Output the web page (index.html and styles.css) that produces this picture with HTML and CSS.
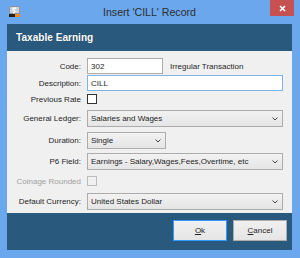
FILE: index.html
```html
<!DOCTYPE html>
<html lang="en">
<head>
    <meta charset="UTF-8">
    <meta name="viewport" content="width=device-width, initial-scale=1.0">
    <title>Insert 'CILL' Record</title>
    <link rel="stylesheet" href="styles.css">
</head>
<body>
    <div class="window">
        <div class="titlebar">
            <svg class="app-icon" width="11" height="11" viewBox="0 0 11 11">
                <rect x="0" y="0" width="11" height="11" rx="1" fill="#8c96a3"/>
                <rect x="1" y="1" width="9" height="6" fill="#c9d0d8"/>
                <path d="M7 2.5 C5 1.5 3 2.5 4.5 4 C6 5 6.5 6.5 4 7" stroke="#ffffff" stroke-width="1.4" fill="none"/>
                <rect x="0" y="8" width="6" height="3" fill="#222222"/>
                <rect x="6" y="8" width="5" height="3" fill="#f08a24"/>
            </svg>
            <div class="title">Insert 'CILL' Record</div>
            <button class="close-btn">
                <svg width="7" height="7" viewBox="0 0 7 7">
                    <path d="M1 1 L6 6 M6 1 L1 6" stroke="#ffffff" stroke-width="1.6"/>
                </svg>
            </button>
        </div>

        <div class="client">
            <div class="header">Taxable Earning</div>

            <div class="form">
                <div class="row row-code">
                    <label>Code:</label>
                    <input type="text" class="textbox code-box" value="302">
                    <span class="side-note">Irregular Transaction</span>
                </div>
                <div class="row row-desc">
                    <label>Description:</label>
                    <input type="text" class="textbox wide focused" value="CILL">
                </div>
                <div class="row row-check">
                    <label>Previous Rate</label>
                    <span class="check"></span>
                </div>
                <div class="row row-gl">
                    <label>General Ledger:</label>
                    <div class="combo wide"><span>Salaries and Wages</span><svg class="chev" width="6" height="4" viewBox="0 0 6 4"><path d="M0.5 0.5 L3 3 L5.5 0.5" stroke="#444" stroke-width="1" fill="none"/></svg></div>
                </div>
                <div class="row row-dur">
                    <label>Duration:</label>
                    <div class="combo short"><span>Single</span><svg class="chev" width="6" height="4" viewBox="0 0 6 4"><path d="M0.5 0.5 L3 3 L5.5 0.5" stroke="#444" stroke-width="1" fill="none"/></svg></div>
                </div>
                <div class="row row-p6">
                    <label>P6 Field:</label>
                    <div class="combo wide"><span>Earnings - Salary,Wages,Fees,Overtime, etc</span><svg class="chev" width="6" height="4" viewBox="0 0 6 4"><path d="M0.5 0.5 L3 3 L5.5 0.5" stroke="#444" stroke-width="1" fill="none"/></svg></div>
                </div>
                <div class="row row-check2">
                    <label class="disabled">Coinage Rounded</label>
                    <span class="check check-disabled"></span>
                </div>
                <div class="row row-cur">
                    <label>Default Currency:</label>
                    <div class="combo wide"><span>United States Dollar</span><svg class="chev" width="6" height="4" viewBox="0 0 6 4"><path d="M0.5 0.5 L3 3 L5.5 0.5" stroke="#444" stroke-width="1" fill="none"/></svg></div>
                </div>
            </div>

            <div class="footer">
                <button class="btn btn-default"><u>O</u>k</button>
                <button class="btn"><u>C</u>ancel</button>
            </div>
        </div>
    </div>
</body>
</html>
```

FILE: styles.css
```css
:root {
    --frame: #6ba7ec;
    --panel: #295a7e;
    --form-bg: #f0f0f0;
    --text: #1e1e1e;
    --border: #acacac;
}

* {
    box-sizing: border-box;
}

body {
    margin: 0;
    background: var(--frame);
    font-family: "Liberation Sans", Arial, sans-serif;
    color: var(--text);
}

.window {
    width: 300px;
    height: 258px;
    padding: 0 8px 8px 7px;
    display: flex;
    flex-direction: column;
}

.titlebar {
    height: 24px;
    display: flex;
    align-items: flex-start;
    position: relative;
}

.app-icon {
    margin: 6px 0 0 2px;
}

.title {
    position: absolute;
    left: 0;
    right: 0;
    top: 6px;
    text-align: center;
    font-size: 10.6px;
    color: #2d2d2d;
    pointer-events: none;
}

.close-btn {
    margin-left: auto;
    margin-right: -2px;
    width: 24px;
    height: 16px;
    border: none;
    padding: 0;
    background: #c75050;
    display: flex;
    align-items: center;
    justify-content: center;
}

.client {
    flex: 1;
    background: var(--panel);
    display: flex;
    flex-direction: column;
}

.header {
    height: 27px;
    padding: 0 0 0 9px;
    display: flex;
    align-items: center;
    color: #ffffff;
    font-weight: bold;
    font-size: 10.1px;
    text-shadow: 0 0 1px rgba(0, 0, 0, 0.4);
}

.form {
    background: var(--form-bg);
    padding: 7px 9px 3px 0;
    display: flex;
    flex-direction: column;
    font-size: 8px;
}

.row {
    display: flex;
    align-items: center;
    height: 17px;
}

.row label {
    width: 80px;
    flex: 0 0 80px;
    text-align: right;
    padding-right: 6px;
    white-space: nowrap;
}

.row label.disabled {
    color: #a0a0a0;
}

.row-code {
    height: 16px;
}

.row-desc {
    height: 16px;
    margin-top: 1px;
}

.row-check {
    height: 14px;
    margin-top: 1px;
}

.row-gl {
    margin-top: 4px;
}

.row-dur {
    margin-top: 5px;
}

.row-p6 {
    margin-top: 4px;
}

.row-check2 {
    height: 14px;
    margin-top: 4px;
}

.row-cur {
    margin-top: 5px;
}

.textbox {
    height: 16px;
    border: 1px solid var(--border);
    background: #ffffff;
    padding: 0 3px;
    font-family: inherit;
    font-size: 8px;
    color: var(--text);
    outline: none;
}

.textbox.focused {
    border-color: #7eb4ea;
}

.code-box {
    width: 76px;
}

.wide {
    flex: 1;
}

.side-note {
    margin-left: 7px;
}

.check {
    width: 10px;
    height: 10px;
    border: 1px solid #333333;
    background: #ffffff;
}

.check-disabled {
    border-color: #bcbcbc;
    background: #f0f0f0;
}

.combo {
    height: 17px;
    border: 1px solid var(--border);
    background: linear-gradient(#f2f2f2, #e5e5e5);
    display: flex;
    align-items: center;
    padding: 0 4px 0 3px;
    white-space: nowrap;
}

.combo span {
    flex: 1;
    overflow: hidden;
}

.combo.short {
    width: 79px;
}

.chev {
    flex: 0 0 auto;
}

.footer {
    flex: 1;
    display: flex;
    justify-content: flex-end;
    align-items: flex-start;
    gap: 6px;
    padding: 7px 5px 0 0;
}

.btn {
    width: 54px;
    height: 21px;
    border: 1px solid var(--border);
    background: linear-gradient(#f0f0f0, #e5e5e5);
    font-family: inherit;
    font-size: 8px;
    color: var(--text);
    padding: 0;
}

.btn-default {
    border-color: #3399ff;
}
```
